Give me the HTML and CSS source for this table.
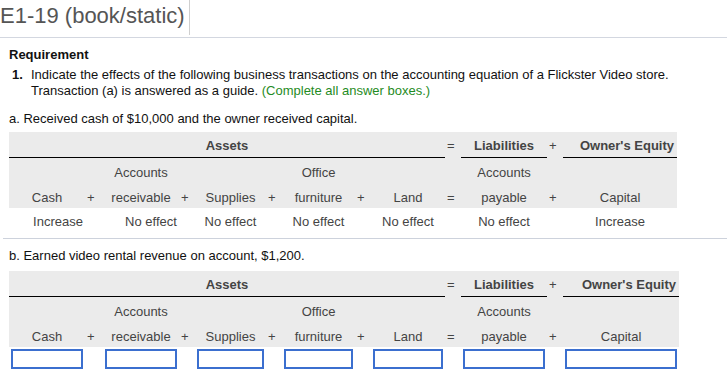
FILE: index.html
```html
<!DOCTYPE html>
<html lang="en">
<head>
<meta charset="utf-8">
<title>E1-19 (book/static)</title>
<link rel="stylesheet" href="styles.css">
</head>
<body>
<div class="topbar">
  <h1 class="title">E1-19 (book/static)</h1>
</div>
<div class="question">
  <div class="req">
    <div class="req-head">Requirement</div>
    <div class="req-item">
      <span class="num">1.</span>
      <span class="req-text">Indicate the effects of the following business transactions on the accounting equation of a Flickster Video store.<br>Transaction (a) is answered as a guide. <span class="hint">(Complete all answer boxes.)</span></span>
    </div>
  </div>

  <div class="part part-a">
    <p class="prompt">a. Received cash of $10,000 and the owner received capital.</p>
    <table class="eq">
      <colgroup>
        <col class="w1"><col class="wop1"><col class="w2"><col class="wop"><col class="w3"><col class="wop"><col class="w4"><col class="wop"><col class="w5"><col class="wop"><col class="w6"><col class="wop"><col class="w7a">
      </colgroup>
      <thead>
        <tr class="r-head">
          <th colspan="9" class="grp">Assets</th><th class="op">=</th><th class="grp">Liabilities</th><th class="op">+</th><th class="grp grp-oe">Owner's Equity</th>
        </tr>
        <tr class="r-sub">
          <td></td><td></td><td>Accounts</td><td></td><td></td><td></td><td>Office</td><td></td><td></td><td></td><td>Accounts</td><td></td><td></td>
        </tr>
        <tr class="r-name">
          <td>Cash</td><td class="op">+</td><td>receivable</td><td class="op">+</td><td>Supplies</td><td class="op">+</td><td>furniture</td><td class="op">+</td><td>Land</td><td class="op">=</td><td>payable</td><td class="op">+</td><td>Capital</td>
        </tr>
      </thead>
      <tbody>
        <tr class="r-data">
          <td colspan="2" class="lead">Increase</td><td colspan="2" class="lead">No effect</td><td>No effect</td><td></td><td>No effect</td><td></td><td>No effect</td><td></td><td>No effect</td><td></td><td>Increase</td>
        </tr>
      </tbody>
    </table>
  </div>

  <div class="part part-b">
    <p class="prompt">b. Earned video rental revenue on account, $1,200.</p>
    <table class="eq">
      <colgroup>
        <col class="w1"><col class="wop1"><col class="w2"><col class="wop"><col class="w3"><col class="wop"><col class="w4"><col class="wop"><col class="w5"><col class="wop"><col class="w6"><col class="wop"><col class="w7">
      </colgroup>
      <thead>
        <tr class="r-head">
          <th colspan="9" class="grp">Assets</th><th class="op">=</th><th class="grp">Liabilities</th><th class="op">+</th><th class="grp grp-oe">Owner's Equity</th>
        </tr>
        <tr class="r-sub">
          <td></td><td></td><td>Accounts</td><td></td><td></td><td></td><td>Office</td><td></td><td></td><td></td><td>Accounts</td><td></td><td></td>
        </tr>
        <tr class="r-name">
          <td>Cash</td><td class="op">+</td><td>receivable</td><td class="op">+</td><td>Supplies</td><td class="op">+</td><td>furniture</td><td class="op">+</td><td>Land</td><td class="op">=</td><td>payable</td><td class="op">+</td><td>Capital</td>
        </tr>
      </thead>
      <tbody>
        <tr class="r-input">
          <td><input class="box" type="text"></td><td></td>
          <td><input class="box" type="text"></td><td></td>
          <td><input class="box" type="text"></td><td></td>
          <td><input class="box" type="text"></td><td></td>
          <td><input class="box" type="text"></td><td></td>
          <td><input class="box" type="text"></td><td></td>
          <td><input class="box" type="text"></td>
        </tr>
      </tbody>
    </table>
  </div>
</div>
</body>
</html>
```

FILE: styles.css
```css
html, body {
  margin: 0;
  padding: 0;
  background: #fff;
}

body {
  font-family: "Liberation Sans", Arial, sans-serif;
  font-size: 13px;
  color: #111;
}

.topbar {
  height: 37px;
  border-bottom: 1px solid #d3d7e0;
}

.title {
  margin: 0;
  box-sizing: border-box;
  width: 190px;
  height: 35px;
  padding-top: 2px;
  border-right: 1px solid #cfcfcf;
  font-size: 22px;
  line-height: 28px;
  font-weight: normal;
  color: #555;
  white-space: nowrap;
}

.question {
  padding-left: 3px;
}

.req {
  padding: 9px 0 0 6px;
  line-height: 16px;
}

.req-head {
  font-weight: bold;
}

.req-item {
  display: flex;
  margin-top: 4px;
}

.num {
  flex: 0 0 auto;
  box-sizing: border-box;
  width: 22px;
  padding-left: 3px;
  font-weight: bold;
}

.hint {
  color: #1f8b24;
}

.part {
  padding-left: 6px;
}

.part-a {
  border-bottom: 1px solid #cdd2dc;
}

.prompt {
  margin: 0;
  line-height: 16px;
}

.part-a .prompt {
  margin: 12px 0 5px;
}

.part-b .prompt {
  margin: 9px 0 7px;
}

.eq {
  table-layout: fixed;
  width: 670px;
  border-collapse: separate;
  border-spacing: 0;
}

.part-a .eq {
  width: 668px;
}

.w1 { width: 76px; }
.wop1 { width: 18px; }
.w2 { width: 76px; }
.wop { width: 16px; }
.w3 { width: 71px; }
.w4 { width: 73px; }
.w5 { width: 74px; }
.w6 { width: 86px; }
.w7 { width: 116px; }
.w7a { width: 114px; }

.eq thead {
  background: #ebebeb;
}

.eq th,
.eq td {
  padding: 0;
  text-align: center;
  vertical-align: top;
  line-height: 16px;
  color: #444;
  font-weight: normal;
  white-space: nowrap;
}

.eq .op {
  text-align: left;
  padding-left: 2px;
}

.r-head th {
  padding-top: 6px;
  padding-bottom: 3px;
  font-weight: bold;
}

.r-head .op {
  font-weight: normal;
}

.r-head .grp {
  border-bottom: 1px solid #000;
}

.r-head .grp-oe {
  text-align: right;
  padding-right: 3px;
}

.r-sub td {
  padding-top: 7px;
  padding-bottom: 3px;
}

.r-name td {
  padding-top: 6px;
  padding-bottom: 2px;
}

.r-data td {
  padding-top: 6px;
  padding-bottom: 8px;
}

.r-data .lead {
  padding-left: 4px;
}

.r-input td {
  padding: 2px 2px 0;
}

.box {
  display: block;
  box-sizing: border-box;
  width: 100%;
  height: 20px;
  margin: 0;
  padding: 0 3px;
  border: 2px solid #3b6fcf;
  border-radius: 0;
  background: #fff;
  font: inherit;
  outline: none;
}
```
